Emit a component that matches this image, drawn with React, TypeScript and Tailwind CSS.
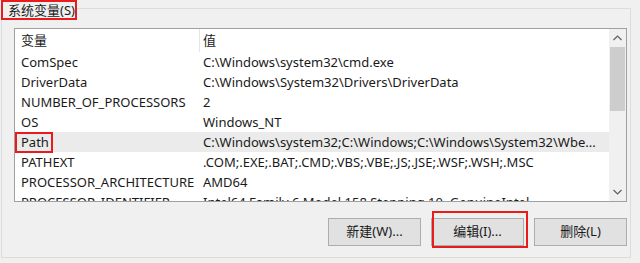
import React from 'react';

const rows: [string, string][] = [
  ['ComSpec', 'C:\\Windows\\system32\\cmd.exe'],
  ['DriverData', 'C:\\Windows\\System32\\Drivers\\DriverData'],
  ['NUMBER_OF_PROCESSORS', '2'],
  ['OS', 'Windows_NT'],
  ['Path', 'C:\\Windows\\system32;C:\\Windows;C:\\Windows\\System32\\Wbe...'],
  ['PATHEXT', '.COM;.EXE;.BAT;.CMD;.VBS;.VBE;.JS;.JSE;.WSF;.WSH;.MSC'],
  ['PROCESSOR_ARCHITECTURE', 'AMD64'],
  ['PROCESSOR_IDENTIFIER', 'Intel64 Family 6 Model 158 Stepping 10, GenuineIntel'],
];

function Chevron({ up }: { up?: boolean }) {
  return (
    <svg width="9" height="6" viewBox="0 0 9 6" className="text-[#606060]">
      <path
        d={up ? 'M0.5 5L4.5 1L8.5 5' : 'M0.5 1L4.5 5L8.5 1'}
        fill="none"
        stroke="currentColor"
        strokeWidth="1.2"
      />
    </svg>
  );
}

export default function App() {
  return (
    <div
      className="h-[263px] w-[640px] overflow-hidden bg-[#f0f0f0] pb-[5px] pl-[1px] pr-[9px] pt-[8px] text-[13px] text-[#1a1a1a]"
      style={{ fontFamily: '"Noto Sans", "Noto Sans CJK SC", sans-serif' }}
    >
      {/* 分组框 */}
      <div className="relative flex h-full flex-col border border-[#dcdcdc] pl-[12px] pr-[3px] pt-[19px]">
        <div className="absolute left-[-1px] top-[-9px] h-[20px] w-[76px] whitespace-nowrap border-2 border-[#e81c1c] bg-[#f0f0f0] pl-[5px] text-[13px] leading-[16px]">
          系统变量(S)
        </div>

        {/* 列表 */}
        <div className="flex h-[174px] overflow-hidden border border-[#a0a0a0] bg-white">
          <div className="relative flex-1 overflow-hidden">
            <div className="grid h-[23px] grid-cols-[185px_1fr] items-center">
              <div className="h-full border-r border-[#e5e5e5] pl-[6px] leading-[23px]">变量</div>
              <div className="pl-[3px]">值</div>
            </div>
            {rows.map(([k, v]) => (
              <div
                key={k}
                className={
                  k === 'Path'
                    ? 'relative grid h-[20px] grid-cols-[185px_1fr] items-center bg-[#ebebeb] leading-[20px]'
                    : 'grid h-[20px] grid-cols-[185px_1fr] items-center leading-[20px]'
                }
              >
                <div className="whitespace-nowrap pl-[6px]">{k}</div>
                <div className="whitespace-nowrap pl-[3px]">{v}</div>
                {k === 'Path' && (
                  <div className="absolute left-0 top-0 h-[21px] w-[38px] border-2 border-[#e81c1c]" />
                )}
              </div>
            ))}
          </div>

          {/* 滚动条 */}
          <div className="flex w-[17px] flex-col bg-[#f0f0f0]">
            <div className="flex h-[18px] items-center justify-center">
              <Chevron up />
            </div>
            <div className="mx-[1px] h-[64px] bg-[#cdcdcd]" />
            <div className="flex-1" />
            <div className="flex h-[18px] items-center justify-center">
              <Chevron />
            </div>
          </div>
        </div>

        {/* 按钮 */}
        <div className="mt-[16px] flex justify-end gap-[10px]">
          {['新建(W)...', '编辑(I)...', '删除(L)'].map((t) => (
            <div key={t} className="relative">
              <button className="h-[28px] w-[93px] border border-[#adadad] bg-[#e1e1e1] text-[13px] text-[#1a1a1a]">
                {t}
              </button>
              {t === '编辑(I)...' && (
                <div className="absolute bottom-[-2px] left-[1px] right-[-4px] top-[-7px] border-2 border-[#e81c1c]" />
              )}
            </div>
          ))}
        </div>
      </div>
    </div>
  );
}
